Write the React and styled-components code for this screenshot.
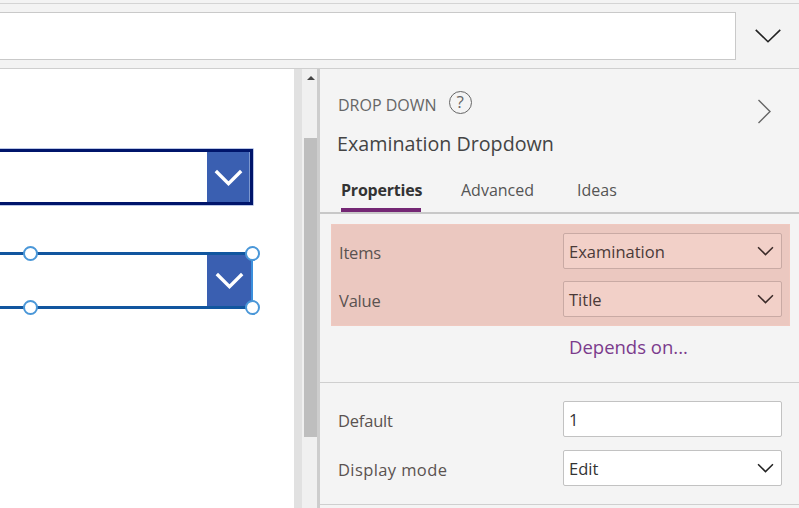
import React from 'react';
import styled, { createGlobalStyle } from 'styled-components';

const GlobalStyle = createGlobalStyle`
  html, body {
    margin: 0;
    padding: 0;
    background: #f3f3f3;
    overflow: hidden;
  }
  * {
    box-sizing: border-box;
  }
`;

const Chevron = ({ size = 16, height = 10, color = '#333', weight = 1.5 }) => (
  <svg width={size} height={height} viewBox="0 0 16 10" preserveAspectRatio="none" fill="none">
    <path d="M1 1.2 L8 8.6 L15 1.2" stroke={color} strokeWidth={weight} vectorEffect="non-scaling-stroke" />
  </svg>
);

const App = () => (
  <>
    <GlobalStyle />
    <StPage>
      <StTopBar>
        <StFormulaInput />
        <StExpandButton>
          <Chevron size={28} height={16} color="#222" weight={1.6} />
        </StExpandButton>
      </StTopBar>

      <StMain>
        <StCanvas>
          <StCanvasDropdown $variant="idle">
            <StDropButton $variant="idle">
              <Chevron size={29} height={17} color="#fff" weight={3.4} />
            </StDropButton>
          </StCanvasDropdown>
          <StCanvasDropdown $variant="selected">
            <StDropButton $variant="selected">
              <Chevron size={29} height={17} color="#fff" weight={3.4} />
            </StDropButton>
            <StHandle $x="30px" $y="top" />
            <StHandle $x="30px" $y="bottom" />
            <StHandle $x="252px" $y="top" />
            <StHandle $x="252px" $y="bottom" />
          </StCanvasDropdown>
        </StCanvas>

        <StScrollGutter />
        <StScrollbar>
          <StScrollArrow />
          <StScrollThumb />
        </StScrollbar>

        <StPanel>
          <StPanelHeader>
            <StTypeRow>
              <StTypeLabel>DROP DOWN</StTypeLabel>
              <StHelp>?</StHelp>
            </StTypeRow>
            <StCollapse>
              <svg width="15" height="25" viewBox="0 0 15 25" fill="none">
                <path d="M1.5 1 L13 12.5 L1.5 24" stroke="#666" strokeWidth="1.4" />
              </svg>
            </StCollapse>
            <StControlName>Examination Dropdown</StControlName>
          </StPanelHeader>

          <StTabs>
            <StTab $active $width="80px">Properties</StTab>
            <StTab $width="76px">Advanced</StTab>
            <StTab>Ideas</StTab>
          </StTabs>

          <StHighlight>
            <StPropRow>
              <StPropLabel>Items</StPropLabel>
              <StSelect $tinted>
                Examination
                <Chevron size={17} height={10} color="#3a2a28" weight={1.5} />
              </StSelect>
            </StPropRow>
            <StPropRow>
              <StPropLabel>Value</StPropLabel>
              <StSelect $tinted>
                Title
                <Chevron size={17} height={10} color="#3a2a28" weight={1.5} />
              </StSelect>
            </StPropRow>
          </StHighlight>

          <StDependsLink>Depends on...</StDependsLink>

          <StSection>
            <StPropRow>
              <StPropLabel>Default</StPropLabel>
              <StSelect>1</StSelect>
            </StPropRow>
            <StPropRow>
              <StPropLabel $spread>Display mode</StPropLabel>
              <StSelect>
                Edit
                <Chevron size={17} height={10} color="#222" weight={1.5} />
              </StSelect>
            </StPropRow>
          </StSection>
        </StPanel>
      </StMain>
    </StPage>
  </>
);

export default App;

const StPage = styled.div`
  width: 799px;
  height: 508px;
  overflow: hidden;
  display: flex;
  flex-direction: column;
  font-family: 'Open Sans', 'Noto Sans', sans-serif;
  color: #444;
  background: #f3f3f3;
`;

const StTopBar = styled.div`
  flex: none;
  display: flex;
  margin-top: 3px;
  height: 66px;
  padding-top: 8px;
  border-top: 1px solid #d4d4d4;
  border-bottom: 1px solid #cfcfcf;
  background: #f3f3f3;
`;

const StFormulaInput = styled.div`
  width: 736px;
  height: 48px;
  background: #fff;
  border: 1px solid #c9c9c9;
  border-left: none;
`;

const StExpandButton = styled.div`
  flex: 1;
  height: 48px;
  display: flex;
  align-items: center;
  justify-content: center;
  padding-left: 1px;
`;

const StMain = styled.div`
  flex: 1;
  display: flex;
  min-height: 0;
`;

const StCanvas = styled.div`
  width: 294px;
  flex: none;
  background: #fff;
  padding-top: 80px;
  display: flex;
  flex-direction: column;
  gap: 47px;
`;

const StCanvasDropdown = styled.div`
  position: relative;
  display: flex;
  justify-content: flex-end;
  width: 253px;
  height: ${(p) => (p.$variant === 'idle' ? '56px' : '57px')};
  background: #fff;
  border-style: solid;
  border-color: ${(p) => (p.$variant === 'idle' ? '#00156b' : '#11569f #3b8fdc #11569f #11569f')};
  border-width: ${(p) => (p.$variant === 'idle' ? '3px 3px 3px 0' : '3px 2px 3px 0')};
  box-shadow: ${(p) => (p.$variant === 'idle' ? '0 0 0 0.6px #8fa3d8' : 'none')};
`;

const StDropButton = styled.div`
  width: ${(p) => (p.$variant === 'idle' ? '43px' : '44px')};
  background: #3a5fb1;
  border-right: ${(p) => (p.$variant === 'idle' ? '1px solid #7d98cf' : 'none')};
  display: flex;
  align-items: center;
  justify-content: center;
`;

const StHandle = styled.span`
  position: absolute;
  left: ${(p) => p.$x};
  ${(p) => (p.$y === 'top' ? 'top: -9px;' : 'bottom: -9px;')}
  width: 15px;
  height: 15px;
  margin-left: -7.5px;
  border-radius: 50%;
  background: #fff;
  border: 2px solid #4a97d8;
`;

const StScrollGutter = styled.div`
  width: 8px;
  flex: none;
  background: #e1e1e1;
`;

const StScrollbar = styled.div`
  width: 18px;
  flex: none;
  background: #f0f0f0;
  border-right: 3px solid #cdcdcd;
  padding: 7px 0 0 2px;
`;

const StScrollArrow = styled.div`
  width: 0;
  height: 0;
  margin-left: 3px;
  border-left: 4px solid transparent;
  border-right: 4px solid transparent;
  border-bottom: 4px solid #444;
`;

const StScrollThumb = styled.div`
  width: 13px;
  height: 299px;
  margin-top: 58px;
  background: #bebebe;
`;

const StPanel = styled.div`
  flex: 1;
  background: #f4f4f4;
  min-width: 0;
`;

const StPanelHeader = styled.div`
  position: relative;
  padding: 23px 0 0 17px;
  height: 98px;
`;

const StTypeRow = styled.div`
  display: flex;
  align-items: center;
  gap: 12px;
  height: 24px;
  padding-left: 1px;
`;

const StTypeLabel = styled.span`
  padding-top: 2px;
  font-size: 16px;
  color: #666;
`;

const StHelp = styled.span`
  width: 23px;
  height: 23px;
  margin-top: -4px;
  border-radius: 50%;
  border: 1.5px solid #666;
  color: #666;
  font-size: 17px;
  line-height: 20px;
  text-align: center;
`;

const StCollapse = styled.div`
  position: absolute;
  right: 27px;
  top: 30px;
  display: flex;
`;

const StControlName = styled.div`
  margin-top: 14px;
  font-size: 19.7px;
  line-height: 27px;
  color: #444;
`;

const StTabs = styled.div`
  display: flex;
  gap: 40px;
  height: 47px;
  padding: 0 0 0 21px;
  border-bottom: 2px solid #c8c8c8;
`;

const StTab = styled.div`
  width: ${(p) => p.$width || 'auto'};
  height: 45px;
  padding-top: 12px;
  font-size: 16px;
  line-height: 22px;
  white-space: nowrap;
  font-weight: ${(p) => (p.$active ? 700 : 400)};
  letter-spacing: ${(p) => (p.$active ? '-0.2px' : '0')};
  color: ${(p) => (p.$active ? '#333' : '#555')};
  border-bottom: ${(p) => (p.$active ? '4px solid #742774' : 'none')};
`;

const StHighlight = styled.div`
  margin: 10px 9px 0 11px;
  height: 102px;
  padding: 8px 7px 0 7px;
  background: #ebc8c0;
  border: 1px solid #f0c9c0;
  display: flex;
  flex-direction: column;
  gap: 12px;
`;

const StPropRow = styled.div`
  display: flex;
  align-items: center;
  justify-content: space-between;
  height: 36px;
`;

const StPropLabel = styled.span`
  padding-top: 3px;
  font-size: 16.5px;
  letter-spacing: ${(p) => (p.$spread ? '0.4px' : '-0.2px')};
  color: #5a5250;
`;

const StSelect = styled.div`
  width: 219px;
  height: 36px;
  display: flex;
  align-items: center;
  justify-content: space-between;
  padding: 0 7px 0 5px;
  font-size: 16.5px;
  color: ${(p) => (p.$tinted ? '#4a3a38' : '#333')};
  background: ${(p) => (p.$tinted ? '#f2d0c8' : '#fff')};
  border: 1px solid ${(p) => (p.$tinted ? '#c9aaa4' : '#c2c2c2')};
  border-radius: 2px;
`;

const StDependsLink = styled.div`
  height: 57px;
  padding: 9px 0 0 249px;
  font-size: 18.5px;
  line-height: 24px;
  color: #7b3b8c;
  border-bottom: 1px solid #cfcfcf;
`;

const StSection = styled.div`
  height: 122px;
  padding: 18px 17px 0 18px;
  display: flex;
  flex-direction: column;
  gap: 13px;
  border-bottom: 1px solid #cfcfcf;
`;
